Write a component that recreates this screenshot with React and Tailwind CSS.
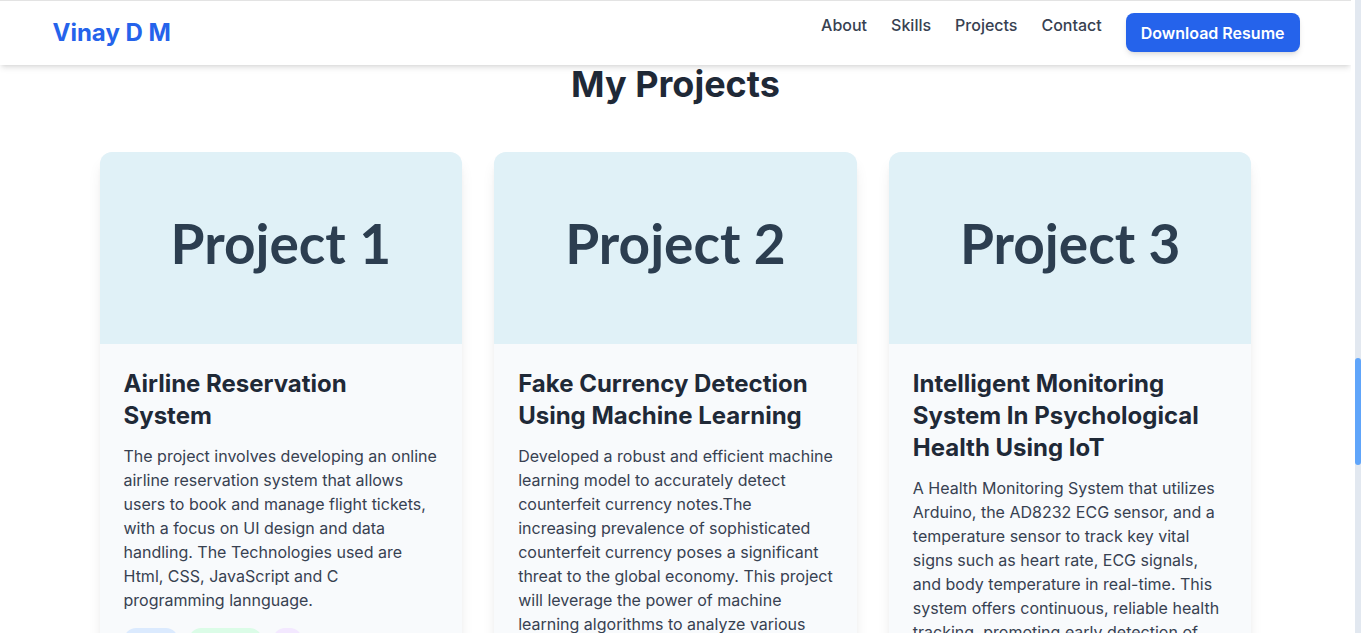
import React from "react";

const projects = [
  {
    n: "Project 1",
    title: "Airline Reservation System",
    desc: "The project involves developing an online airline reservation system that allows users to book and manage flight tickets, with a focus on UI design and data handling. The Technologies used are Html, CSS, JavaScript and C programming lannguage.",
    tags: [
      ["HTML", "bg-blue-100 text-blue-800"],
      ["CSS & JS", "bg-green-100 text-green-800"],
      ["C", "bg-purple-100 text-purple-800"],
    ],
  },
  {
    n: "Project 2",
    title: "Fake Currency Detection Using Machine Learning",
    desc: "Developed a robust and efficient machine learning model to accurately detect counterfeit currency notes.The increasing prevalence of sophisticated counterfeit currency poses a significant threat to the global economy. This project will leverage the power of machine learning algorithms to analyze various features of currency notes and classify them as genuine or fake.",
    tags: [
      ["Python", "bg-blue-100 text-blue-800"],
      ["ML", "bg-green-100 text-green-800"],
    ],
  },
  {
    n: "Project 3",
    title: "Intelligent Monitoring System In Psychological Health Using IoT",
    desc: "A Health Monitoring System that utilizes Arduino, the AD8232 ECG sensor, and a temperature sensor to track key vital signs such as heart rate, ECG signals, and body temperature in real-time. This system offers continuous, reliable health tracking, promoting early detection of potential health issues.",
    tags: [
      ["Arduino", "bg-blue-100 text-blue-800"],
      ["IoT", "bg-green-100 text-green-800"],
    ],
  },
];

export default function App() {
  return (
    <div
      className="flex h-screen w-full overflow-hidden bg-white"
      style={{ fontFamily: "Inter, 'Noto Sans', sans-serif" }}
    >
      <div className="flex min-w-0 flex-1 flex-col overflow-hidden">
        <nav className="relative z-10 h-[65px] shrink-0 border-t border-[#e3e3e3] bg-white shadow-md">
          <div className="mx-auto flex h-full max-w-7xl items-center justify-between px-4">
            <div className="pl-[1px] text-2xl font-bold text-[#2563eb]">Vinay D M</div>
            <div className="-mt-px flex items-start gap-6">
              <a className="text-base font-medium leading-6 text-[#374151]">About</a>
              <a className="text-base font-medium leading-6 text-[#374151]">Skills</a>
              <a className="text-base font-medium leading-6 text-[#374151]">Projects</a>
              <a className="text-base font-medium leading-6 text-[#374151]">Contact</a>
              <button className="h-[39px] rounded-lg bg-[#2563eb] px-[15px] text-base font-semibold text-white shadow-md">
                Download Resume
              </button>
            </div>
          </div>
        </nav>
        <section className="-mt-px">
          <h2 className="text-center text-4xl font-bold leading-10 text-[#1f2937]">My Projects</h2>
          <div className="mx-auto mt-12 grid max-w-6xl grid-cols-3 gap-8">
            {projects.map((p) => (
              <div key={p.n} className="overflow-hidden rounded-xl bg-[#f8fafc] shadow-lg">
                <div className="flex h-48 items-center justify-center bg-[#e0f1f7] pb-[9px]">
                  <span
                    className="text-[55px] font-bold leading-none text-[#2c3e50]"
                    style={{ fontFamily: "Lato, sans-serif" }}
                  >
                    {p.n}
                  </span>
                </div>
                <div className="p-6">
                  <h3 className="mb-3 text-2xl font-bold leading-8 text-[#1f2937]">{p.title}</h3>
                  <p className="mb-4 text-base leading-6 text-[#374151]">{p.desc}</p>
                  <div className="flex flex-wrap gap-[11px]">
                    {p.tags.map(([t, c]) => (
                      <span key={t} className={`rounded-full px-[10px] py-1 text-xs font-medium ${c}`}>
                        {t}
                      </span>
                    ))}
                  </div>
                </div>
              </div>
            ))}
          </div>
        </section>
      </div>
      <div className="w-[4px] shrink-0 bg-white" />
      <div className="flex w-[6px] shrink-0 flex-col bg-[#e2e8f0]">
        <div className="h-[358px] shrink-0" />
        <div className="h-[107px] shrink-0 rounded-full bg-[#60a5fa]" />
      </div>
    </div>
  );
}
